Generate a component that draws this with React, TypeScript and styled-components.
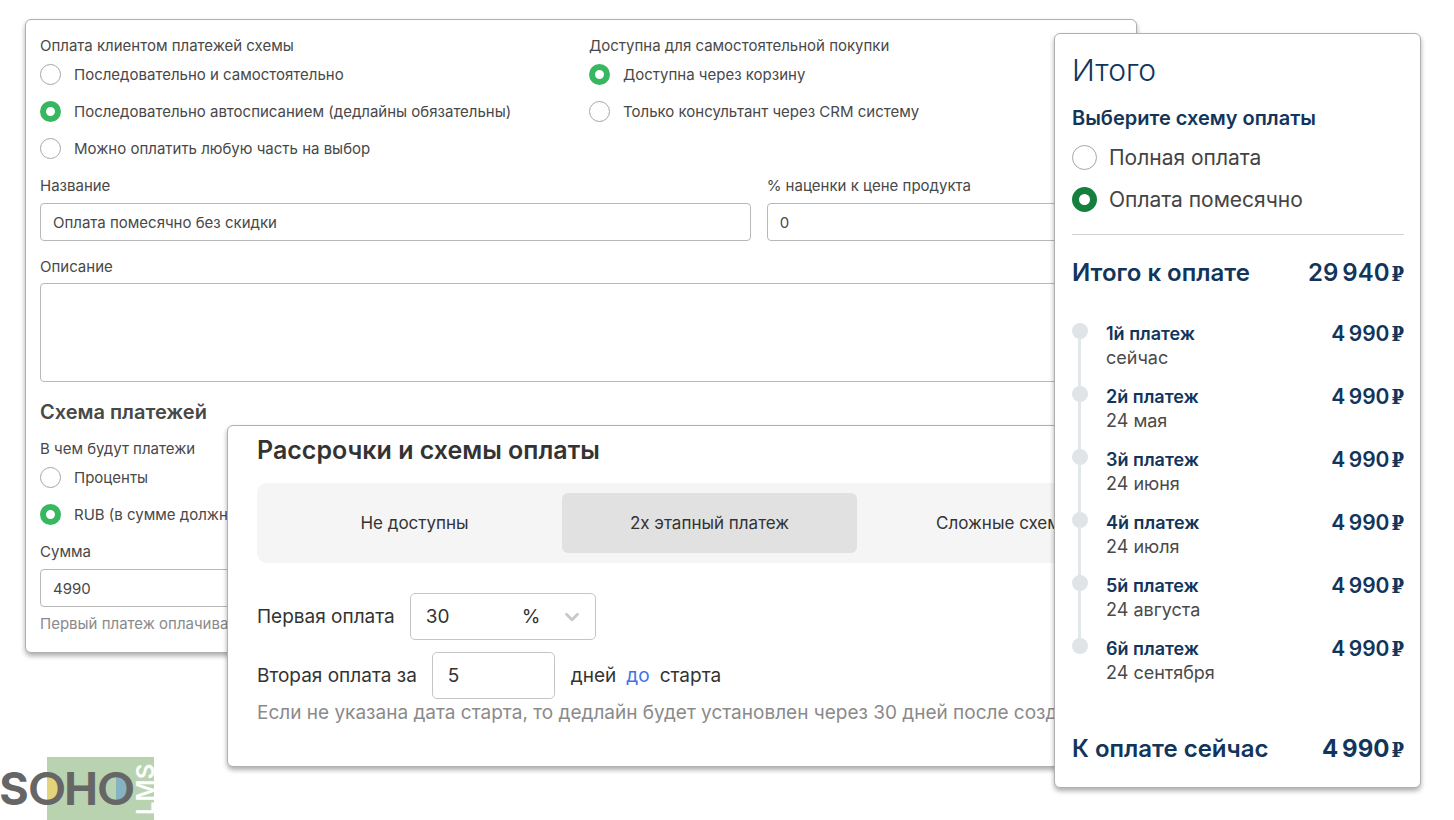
import React from "react";
import styled, { createGlobalStyle, css } from "styled-components";
import { ChevronDown } from "lucide-react";

const GlobalStyle = createGlobalStyle`
  *, *::before, *::after { box-sizing: border-box; }
  body { margin: 0; background: #fff; font-family: Inter, "Liberation Sans", sans-serif; }
  h1, h2, p, ol { margin: 0; padding: 0; }
  input, textarea, select, button { font: inherit; color: inherit; }
`;

const Stage = styled.main`
  display: grid;
  grid-template-columns: minmax(0, 1fr);
  min-height: 100vh;
  overflow: hidden;
  & > * { grid-area: 1 / 1; align-self: start; }
`;

const Card = styled.section`
  background: #fff;
  border: 1px solid #b0b0b0;
  border-radius: 6px;
  box-shadow: 0 3px 5px rgba(0, 0, 0, 0.32);
`;

const SchemeCard = styled(Card)`
  margin: 19px 317px 0 25px;
  padding: 16px 14px 18px;
  font-size: 15px;
  line-height: 20px;
  color: #484848;
`;

const InstallmentCard = styled(Card)`
  margin: 425px 262px 0 227px;
  padding: 8px 29px 40px;
  font-size: 19px;
  line-height: 26px;
  color: #333;
`;

const SummaryCard = styled(Card)`
  justify-self: end;
  width: 367px;
  margin: 33px 33px 0 0;
  padding: 16px 16px 22px 17px;
  color: #12355b;
`;

const Columns = styled.div<{ $template: string }>`
  display: grid;
  grid-template-columns: ${(p) => p.$template};
  gap: 16px;
`;

const Group = styled.fieldset`
  border: 0;
  margin: 0 0 1px;
  padding: 0;
  min-width: 0;
`;

const Legend = styled.legend`
  padding: 0;
  margin-bottom: 7px;
`;

const Option = styled.label<{ $large?: boolean }>`
  display: flex;
  align-items: center;
  ${(p) =>
    p.$large
      ? css`
          gap: 12px;
          height: 42px;
          font-size: 21px;
          color: #444;
        `
      : css`
          gap: 13px;
          height: 23px;
          line-height: 24px;
          margin-bottom: 14px;
          &:last-child { margin-bottom: 15px; }
        `}
`;

const Radio = styled.input.attrs({ type: "radio" })<{ $large?: boolean }>`
  appearance: none;
  flex: none;
  width: ${(p) => (p.$large ? 25 : 21)}px;
  height: ${(p) => (p.$large ? 25 : 21)}px;
  margin: 0;
  border: 1px solid #a6a6a6;
  border-radius: 50%;
  background: #fff;
  &:checked {
    border: ${(p) => (p.$large ? "7px solid #15803d" : "6px solid #38b761")};
  }
`;

const Field = styled.div<{ $gap?: number }>`
  display: flex;
  flex-direction: column;
  gap: ${(p) => p.$gap ?? 7}px;
  margin-bottom: 16px;
  ${SchemeCard} > &:last-child { margin-bottom: 0; }
`;

const TextInput = styled.input`
  width: 100%;
  height: 38px;
  padding: 0 12px;
  border: 1px solid #b8b8b8;
  border-radius: 4px;
  background: #fff;
`;

const TextArea = styled.textarea`
  display: block;
  width: 100%;
  height: 99px;
  padding: 8px 12px;
  border: 1px solid #b8b8b8;
  border-radius: 4px;
  background: #fff;
  resize: none;
`;

const SectionTitle = styled.h2`
  margin: 18px 0 15px;
  font-size: 20px;
  line-height: 24px;
  font-weight: 600;
`;

const Hint = styled.p`
  color: #8a8a8a;
`;

const CardTitle = styled.h2`
  font-size: 25px;
  line-height: 32px;
  font-weight: 600;
  color: #333;
`;

const Segments = styled.div`
  display: grid;
  grid-template-columns: repeat(3, 1fr);
  margin: 17px 0 30px;
  padding: 10px;
  border-radius: 10px;
  background: #f5f5f5;
`;

const Segment = styled.button<{ $active?: boolean }>`
  height: 60px;
  border: 0;
  border-radius: 6px;
  background: ${(p) => (p.$active ? "#e1e1e1" : "transparent")};
  font-size: 17px;
`;

const Row = styled.div`
  display: flex;
  align-items: center;
  height: 47px;
  margin-bottom: 12px;
`;

const boxed = css`
  height: 47px;
  border: 1px solid #c4c4c4;
  border-radius: 5px;
  background: #fff;
`;

const AmountBox = styled.div`
  ${boxed}
  display: flex;
  align-items: center;
  width: 186px;
  margin-left: 15px;
  padding: 0 12px 0 15px;
`;

const BareInput = styled.input`
  width: 96px;
  padding: 0;
  border: 0;
  background: transparent;
  outline: none;
`;

const UnitSelect = styled.select`
  appearance: none;
  flex: 1;
  min-width: 0;
  padding: 0;
  border: 0;
  background: transparent;
  outline: none;
`;

const DaysInput = styled.input`
  ${boxed}
  width: 123px;
  margin: 0 16px 0 15px;
  padding: 0 15px;
`;

const Toggle = styled.a`
  margin: 0 10px;
  color: #3f74e8;
  text-decoration: none;
`;

const Note = styled.p`
  margin-top: -11px;
  color: #8a8a8a;
  white-space: nowrap;
  overflow: hidden;
`;

const SummaryTitle = styled.h1`
  margin-bottom: 14px;
  font-size: 30px;
  line-height: 40px;
  font-weight: 300;
`;

const SummaryLegend = styled.legend`
  padding: 0;
  margin-bottom: 4px;
  font-size: 20px;
  line-height: 28px;
  font-weight: 600;
`;

const Divider = styled.hr`
  margin: 14px 0 22px;
  border: 0;
  border-top: 1px solid #d2d2d2;
`;

const TotalRow = styled.div`
  display: flex;
  justify-content: space-between;
  align-items: baseline;
  font-size: 24px;
  line-height: 32px;
  font-weight: 600;
`;

const Money = styled.span<{ $bold?: boolean }>`
  font-weight: ${(p) => (p.$bold ? 700 : 600)};
  white-space: nowrap;
`;

const Ruble = styled.span`
  margin-left: 2px;
  font-family: "DejaVu Serif Condensed", "DejaVu Serif", serif;
  font-size: 20px;
  line-height: 1;
  font-weight: 700;
`;

const Timeline = styled.ol`
  && { margin: 33px 0; }
  list-style: none;
`;

const Step = styled.li`
  display: grid;
  grid-template-columns: 15px 1fr auto;
  column-gap: 19px;
  height: 63px;
`;

const Rail = styled.span<{ $last?: boolean }>`
  display: flex;
  flex-direction: column;
  align-items: center;
  &::before {
    content: "";
    flex: none;
    width: 16px;
    height: 16px;
    margin-top: 1px;
    border-radius: 50%;
    background: #e0e4e7;
  }
  &::after {
    content: "";
    width: 3px;
    height: ${(p) => (p.$last ? 0 : 49)}px;
    flex: none;
    background: #e4e7ea;
  }
`;

const StepText = styled.div`
  line-height: 24px;
  font-size: 18px;
  color: #4a4a4a;
`;

const StepName = styled.div`
  font-weight: 600;
  color: #12355b;
`;

const StepSum = styled.div`
  font-size: 21px;
  line-height: 24px;
`;

const Logo = styled.svg`
  && { align-self: end; }
  justify-self: start;
  display: block;
`;

const steps: [string, string][] = [
  ["1й платеж", "сейчас"],
  ["2й платеж", "24 мая"],
  ["3й платеж", "24 июня"],
  ["4й платеж", "24 июля"],
  ["5й платеж", "24 августа"],
  ["6й платеж", "24 сентября"],
];

function Choice(props: { name: string; text: string; checked?: boolean; large?: boolean }) {
  return (
    <Option $large={props.large}>
      <Radio name={props.name} defaultChecked={props.checked} $large={props.large} />
      {props.text}
    </Option>
  );
}

function Price({ value, bold }: { value: string; bold?: boolean }) {
  return (
    <Money $bold={bold}>
      {value.replace(" ", "\u2009")}
      <Ruble>₽</Ruble>
    </Money>
  );
}

export default function App() {
  return (
    <>
      <GlobalStyle />
      <Stage>
        <SchemeCard>
          <Columns $template="1fr 1fr">
            <Group>
              <Legend>Оплата клиентом платежей схемы</Legend>
              <Choice name="order" text="Последовательно и самостоятельно" />
              <Choice name="order" text="Последовательно автосписанием (дедлайны обязательны)" checked />
              <Choice name="order" text="Можно оплатить любую часть на выбор" />
            </Group>
            <Group>
              <Legend>Доступна для самостоятельной покупки</Legend>
              <Choice name="access" text="Доступна через корзину" checked />
              <Choice name="access" text="Только консультант через CRM систему" />
            </Group>
          </Columns>
          <Columns $template="2fr 1fr">
            <Field>
              <label htmlFor="title">Название</label>
              <TextInput id="title" defaultValue="Оплата помесячно без скидки" />
            </Field>
            <Field>
              <label htmlFor="markup">% наценки к цене продукта</label>
              <TextInput id="markup" defaultValue="0" />
            </Field>
          </Columns>
          <Field $gap={6}>
            <label htmlFor="description">Описание</label>
            <TextArea id="description" />
          </Field>
          <SectionTitle>Схема платежей</SectionTitle>
          <Group>
            <Legend>В чем будут платежи</Legend>
            <Choice name="unit" text="Проценты" />
            <Choice name="unit" text="RUB (в сумме должно" checked />
          </Group>
          <Field>
            <label htmlFor="sum">Сумма</label>
            <TextInput id="sum" defaultValue="4990" />
            <Hint>Первый платеж оплачивается</Hint>
          </Field>
        </SchemeCard>

        <InstallmentCard>
          <CardTitle>Рассрочки и схемы оплаты</CardTitle>
          <Segments>
            <Segment type="button">Не доступны</Segment>
            <Segment type="button" $active>2х этапный платеж</Segment>
            <Segment type="button">Сложные схемы</Segment>
          </Segments>
          <Row>
            <label htmlFor="first">Первая оплата</label>
            <AmountBox>
              <BareInput id="first" defaultValue="30" />
              <UnitSelect aria-label="Единица">
                <option>%</option>
              </UnitSelect>
              <ChevronDown size={22} color="#c8c8c8" strokeWidth={3} />
            </AmountBox>
          </Row>
          <Row>
            <label htmlFor="days">Вторая оплата за</label>
            <DaysInput id="days" defaultValue="5" />
            дней
            <Toggle href="#before">до</Toggle>
            старта
          </Row>
          <Note>Если не указана дата старта, то дедлайн будет установлен через 30 дней после создания</Note>
        </InstallmentCard>

        <SummaryCard>
          <SummaryTitle>Итого</SummaryTitle>
          <Group>
            <SummaryLegend>Выберите схему оплаты</SummaryLegend>
            <Choice name="plan" text="Полная оплата" large />
            <Choice name="plan" text="Оплата помесячно" large checked />
          </Group>
          <Divider />
          <TotalRow>
            <span>Итого к оплате</span>
            <Price value="29 940" />
          </TotalRow>
          <Timeline>
            {steps.map(([name, date], i) => (
              <Step key={name}>
                <Rail $last={i === steps.length - 1} />
                <StepText>
                  <StepName>{name}</StepName>
                  {date}
                </StepText>
                <StepSum>
                  <Price value="4 990" />
                </StepSum>
              </Step>
            ))}
          </Timeline>
          <TotalRow>
            <span>К оплате сейчас</span>
            <Price value="4 990" bold />
          </TotalRow>
        </SummaryCard>

        <Logo width="170" height="63" viewBox="0 0 170 63" role="img" aria-label="SOHO LMS">
          <rect x="47" y="0" width="107" height="63" fill="#b9d3b1" />
          <path d="M47 19a13 13 0 0 0 0 26z" fill="#fff" />
          <path d="M47 19a13 13 0 0 1 0 26z" fill="#e3d37a" />
          <path d="M116 19a13 13 0 0 1 0 26z" fill="#86b3c4" />
          <g fill="#666" fontSize="46" fontWeight="700" textAnchor="middle">
            <text x="14" y="48" fontFamily="Inter" fontSize="45">S</text>
            <text x="47" y="48" fontFamily="Lato">O</text>
            <text x="81" y="48" fontFamily="Inter" fontSize="45">H</text>
            <text x="116" y="48" fontFamily="Lato">O</text>
          </g>
          <text transform="translate(154 58) rotate(-90)" fontFamily="Inter" fontSize="24" fontWeight="600" fill="#fff">LMS</text>
        </Logo>
      </Stage>
    </>
  );
}
